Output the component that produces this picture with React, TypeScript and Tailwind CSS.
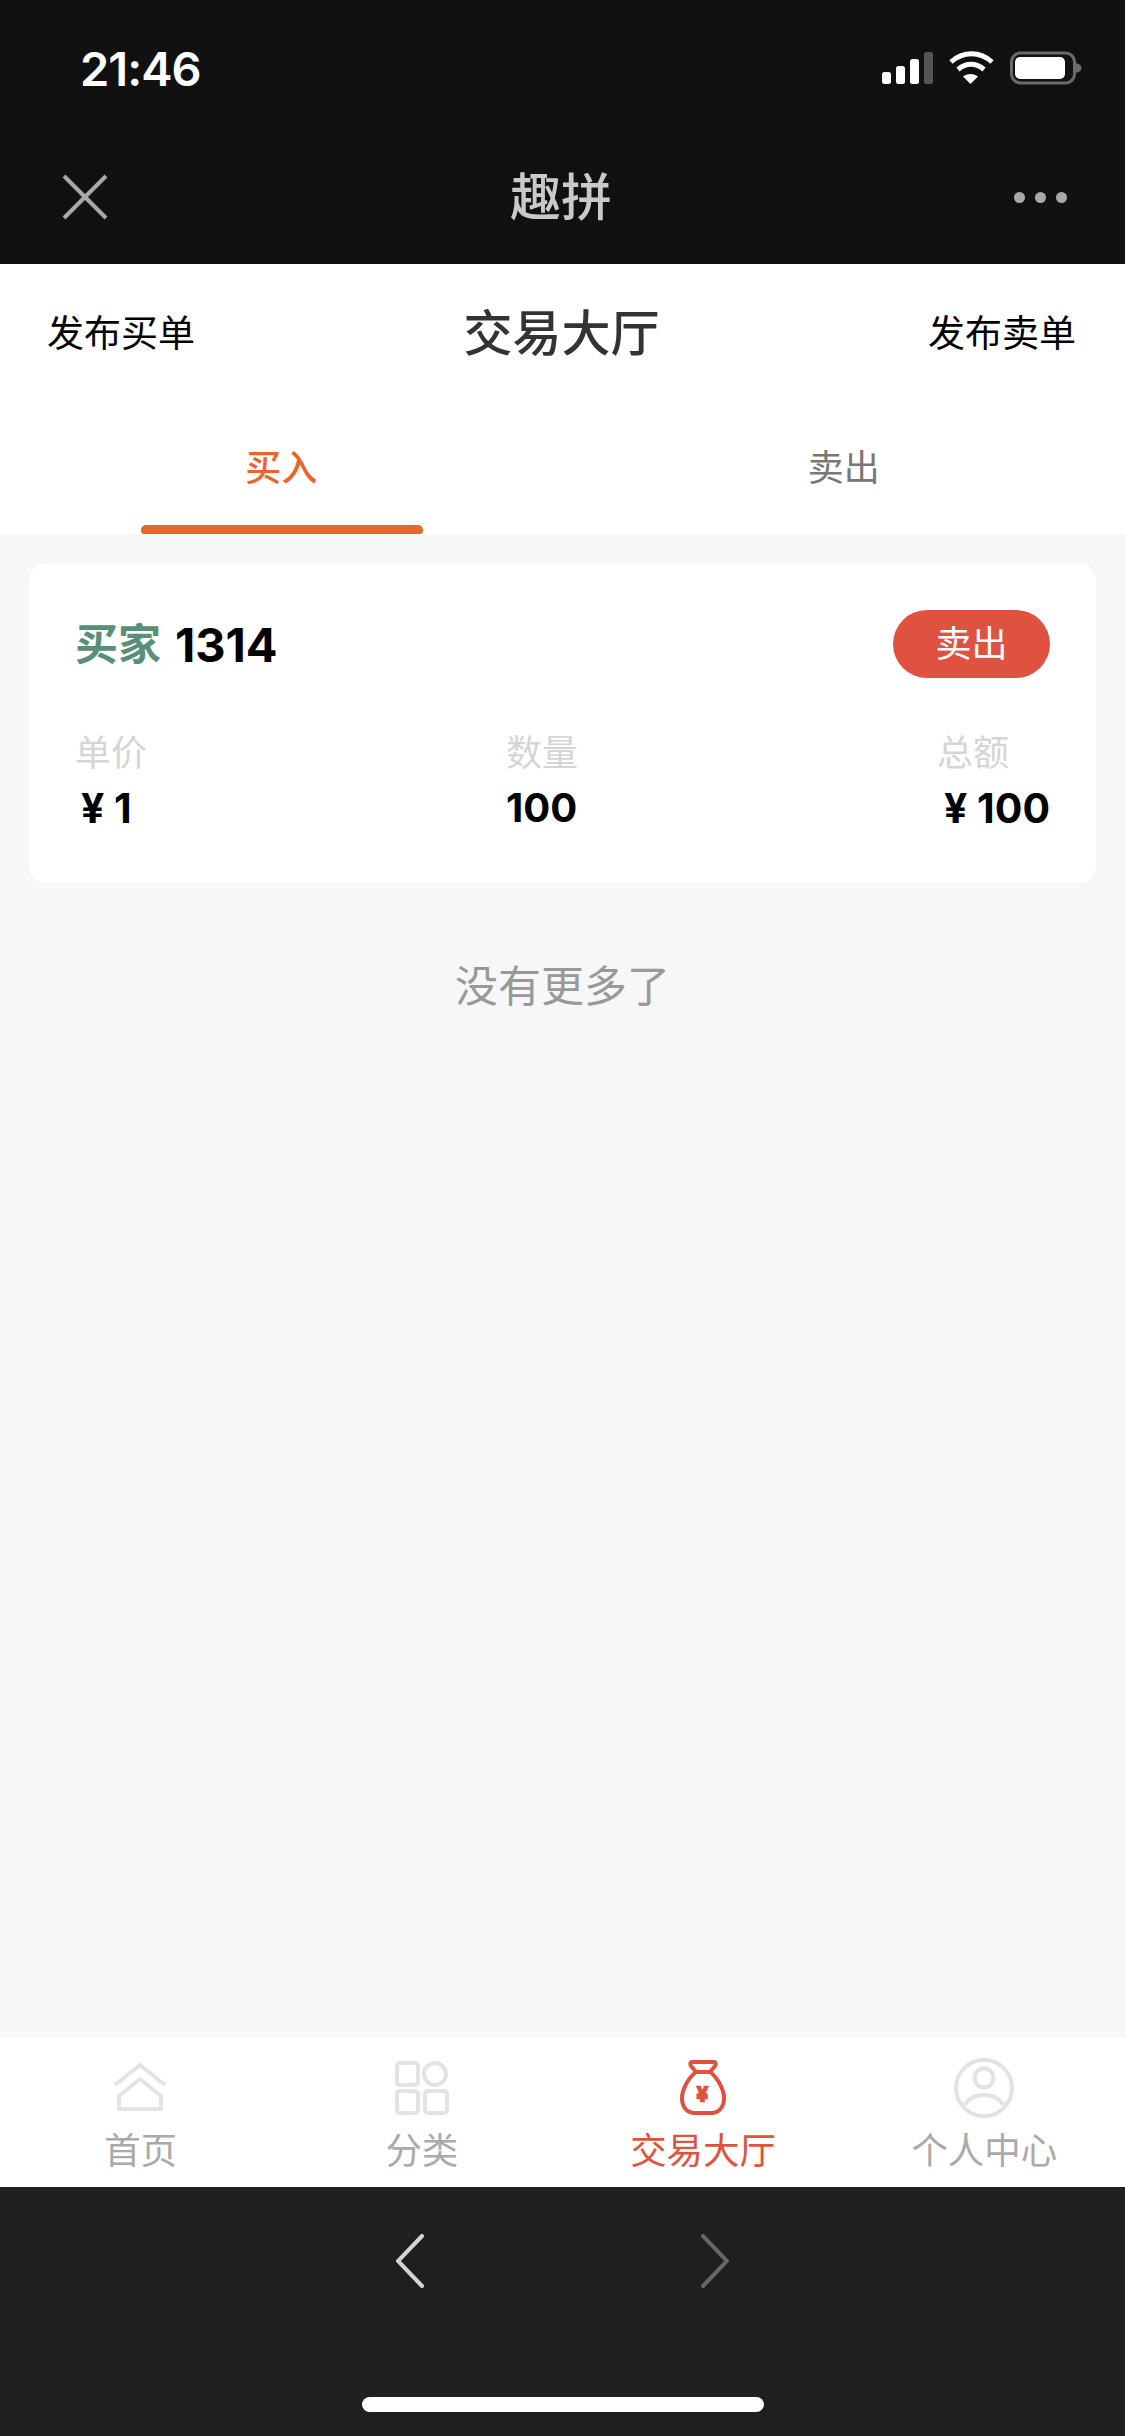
import React from 'react';

const fontStack = "font-['Inter','Noto_Sans_CJK_SC',sans-serif]";

const StatusIcons = () => (
  <svg width="200" height="34" viewBox="0 0 200 34" fill="none">
    <rect x="0" y="21" width="9" height="12" rx="2.5" fill="#fff" />
    <rect x="14" y="15" width="9" height="18" rx="2.5" fill="#fff" />
    <rect x="28" y="8" width="9" height="25" rx="2.5" fill="#fff" />
    <rect x="42" y="1" width="9" height="32" rx="2.5" fill="#555" />
    <path d="M69 11C81 0 98 0 110 11" stroke="#fff" strokeWidth="5" />
    <path d="M76 18.5C84 11.5 94 11.5 102 18.5" stroke="#fff" strokeWidth="5" />
    <path d="M81 25.5C85 22 92 22 96 25.5L88.5 33Z" fill="#fff" />
    <rect x="129.5" y="2" width="63" height="30" rx="9" stroke="#6b6b6b" strokeWidth="3" />
    <rect x="133" y="6" width="50" height="22" rx="5" fill="#fff" />
    <path d="M194 12C198 13 199.5 15 199.5 17C199.5 19 198 21 194 22Z" fill="#6b6b6b" />
  </svg>
);

const CloseIcon = () => (
  <svg width="46" height="46" viewBox="0 0 46 46" fill="none" stroke="#a8a8a8" strokeWidth="4">
    <path d="M2 2L44 44" />
    <path d="M44 2L2 44" />
  </svg>
);

const HomeIcon = () => (
  <svg width="56" height="50" viewBox="0 0 56 50" fill="none" stroke="#e3e3e3" strokeWidth="4" strokeLinejoin="round">
    <path d="M2 22L27 2L52 22" />
    <path d="M6 33L27 16L48 33V46H6Z" />
  </svg>
);

const GridIcon = () => (
  <svg width="54" height="54" viewBox="0 0 54 54" fill="none" stroke="#e3e3e3" strokeWidth="4">
    <rect x="2" y="2" width="21" height="22" rx="3" />
    <circle cx="40" cy="13" r="11" />
    <rect x="2" y="30" width="21" height="22" rx="3" />
    <rect x="30" y="30" width="22" height="22" rx="3" />
  </svg>
);

const BagIcon = () => (
  <svg width="48" height="56" viewBox="0 0 48 56" fill="none" stroke="#e05240" strokeWidth="4">
    <path d="M13 2H35C37 2 37 4 36 6L31 12H17L12 6C11 4 11 2 13 2Z" strokeLinejoin="round" />
    <path d="M17 12C9 18 3 30 3 38C3 48 9 53 15 53H33C39 53 45 48 45 38C45 30 39 18 31 12" />
    <text x="23.5" y="42" textAnchor="middle" fontSize="22" fontWeight="900" fill="#e05240" stroke="#e05240" strokeWidth="0.6" fontFamily="Inter">¥</text>
  </svg>
);

const PersonIcon = () => (
  <svg width="60" height="60" viewBox="0 0 60 60" fill="none" stroke="#e3e3e3" strokeWidth="4">
    <circle cx="30" cy="30" r="28" />
    <circle cx="30" cy="20" r="9.5" />
    <path d="M9 49C14 41 21 37 30 37C39 37 46 41 51 49" />
  </svg>
);

const tabs = [
  { label: '首页', icon: <HomeIcon />, active: false },
  { label: '分类', icon: <GridIcon />, active: false },
  { label: '交易大厅', icon: <BagIcon />, active: true },
  { label: '个人中心', icon: <PersonIcon />, active: false },
];

const App: React.FC = () => {
  return (
    <div className={`flex h-[2436px] w-[1125px] flex-col bg-[#f7f7f7] ${fontStack}`}>
      {/* wechat header */}
      <div className="h-[264px] shrink-0 bg-[#111111]">
        <div className="flex h-[136px] items-center justify-between pr-[43px] pl-[80px]">
          <span className="text-[47px] leading-none font-semibold tracking-[-1px] text-white">21:46</span>
          <StatusIcons />
        </div>
        <div className="flex h-[122px] items-center justify-between pr-[58px] pl-[62px]">
          <CloseIcon />
          <span className="text-[51px] leading-none font-medium text-[#c9c9c9]">趣拼</span>
          <div className="flex gap-[10px]">
            <span className="h-[11px] w-[11px] rounded-full bg-[#a8a8a8]" />
            <span className="h-[11px] w-[11px] rounded-full bg-[#a8a8a8]" />
            <span className="h-[11px] w-[11px] rounded-full bg-[#a8a8a8]" />
          </div>
        </div>
      </div>

      {/* title and tabs */}
      <div className="h-[270px] shrink-0 bg-white">
        <div className="flex h-[136px] items-center justify-between pt-[3px] pr-[49px] pl-[47px]">
          <span className="text-[37px] leading-none text-black">发布买单</span>
          <span className="text-[49px] leading-none font-medium text-[#333333]">交易大厅</span>
          <span className="text-[37px] leading-none text-black">发布卖单</span>
        </div>
        <div className="grid h-[134px] grid-cols-2">
          <div className="flex flex-col items-center justify-between pt-[48px]">
            <span className="text-[36px] leading-[40px] font-medium text-[#e8652f]">买入</span>
            <span className="ml-[1px] h-[9px] w-[282px] rounded-t-[5px] rounded-b-[3px] bg-[#e8652f]" />
          </div>
          <div className="flex flex-col items-center pt-[48px]">
            <span className="text-[36px] leading-[40px] text-[#777777]">卖出</span>
          </div>
        </div>
      </div>

      {/* list */}
      <div className="flex-1">
        <div className="mx-[29px] mt-[30px] h-[319px] rounded-[16px] bg-white pt-[46px] pr-[46px] pl-[46px]">
          <div className="flex items-center justify-between">
            <div className="flex items-center gap-[14px]">
              <span className="text-[43px] leading-none font-bold text-[#578f77]">买家</span>
              <span className="text-[47px] leading-none font-bold text-black">1314</span>
            </div>
            <button className="flex h-[68px] w-[157px] items-center justify-center rounded-[34px] bg-[#e05240] text-[36px] leading-none text-white">
              卖出
            </button>
          </div>
          <div className="mt-[53px] grid grid-cols-[431px_431px_auto]">
            <div className="flex flex-col gap-[11px]">
              <span className="text-[36px] leading-[44px] text-[#d5d5d5]">单价</span>
              <span className="pl-[6px] text-[41px] leading-[44px] font-bold text-black">¥ 1</span>
            </div>
            <div className="flex flex-col gap-[11px]">
              <span className="text-[36px] leading-[44px] text-[#d5d5d5]">数量</span>
              <span className="text-[40px] leading-[44px] font-bold text-black">100</span>
            </div>
            <div className="flex flex-col gap-[11px]">
              <span className="text-[36px] leading-[44px] text-[#d5d5d5]">总额</span>
              <span className="pl-[7px] text-[41px] leading-[44px] font-bold whitespace-nowrap text-black">¥ 100</span>
            </div>
          </div>
        </div>
        <p className="mt-[77px] text-center text-[43px] leading-[52px] text-[#999999]">没有更多了</p>
      </div>

      {/* tab bar */}
      <div className="grid h-[150px] shrink-0 grid-cols-4 bg-white pt-[22px]">
        {tabs.map((tab) => (
          <div key={tab.label} className="flex flex-col items-center">
            <div className="flex h-[58px] items-center justify-center">{tab.icon}</div>
            <span
              className={
                tab.active
                  ? 'mt-[12px] text-[36.5px] leading-[44px] text-[#e05240]'
                  : 'mt-[12px] text-[36.5px] leading-[44px] text-[#aaaaaa]'
              }
            >
              {tab.label}
            </span>
          </div>
        ))}
      </div>

      {/* browser toolbar */}
      <div className="flex h-[249px] shrink-0 flex-col items-center bg-[#1f1f1f]">
        <div className="mt-[47px] flex gap-[277px]">
          <svg width="28" height="54" viewBox="0 0 28 54" fill="none" stroke="#d4d4d4" strokeWidth="4" strokeLinecap="round">
            <path d="M26 2L2 27L26 52" />
          </svg>
          <svg width="28" height="54" viewBox="0 0 28 54" fill="none" stroke="#666666" strokeWidth="4" strokeLinecap="round">
            <path d="M2 2L26 27L2 52" />
          </svg>
        </div>
        <div className="mt-[109px] h-[15px] w-[402px] rounded-full bg-white" />
      </div>
    </div>
  );
};

export default App;
